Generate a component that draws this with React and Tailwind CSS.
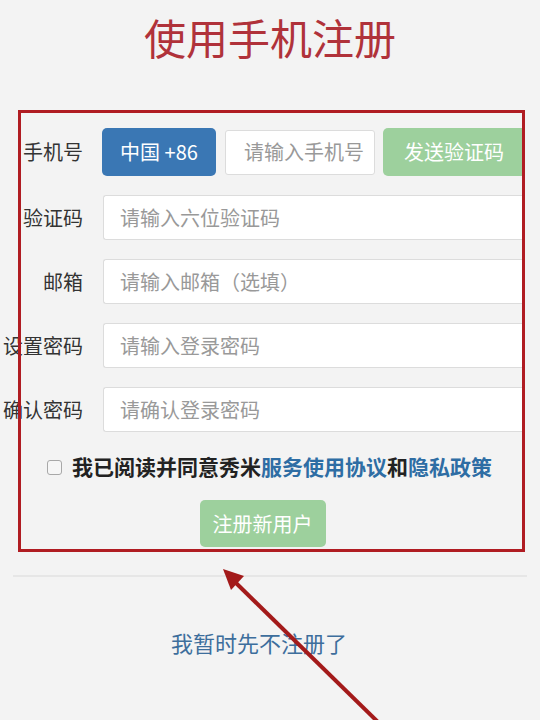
import React from "react";

const rows = [
  { label: "验证码", placeholder: "请输入六位验证码" },
  { label: "邮箱", placeholder: "请输入邮箱（选填）" },
  { label: "设置密码", placeholder: "请输入登录密码" },
  { label: "确认密码", placeholder: "请确认登录密码" },
];

const App = () => {
  return (
    <div className="relative w-[540px] h-[720px] overflow-hidden bg-[#f3f3f3] font-['Noto_Sans_CJK_SC',sans-serif]">
      <h1 className="pt-[12px] text-center text-[42px] leading-[50px] text-[#b0323a]">
        使用手机注册
      </h1>

      <div className="mt-[66px] pr-[15px]">
        <div className="flex items-center h-[48px]">
          <span className="w-[83px] text-right text-[20px] text-[#333]">手机号</span>
          <div className="ml-[19px] w-[114px] h-[48px] flex items-center justify-center rounded-[5px] bg-[#3a77b4] text-white text-[20px]">
            中国 +86
          </div>
          <div className="ml-[9px] w-[150px] h-[45px] flex items-center pl-[18px] overflow-hidden whitespace-nowrap rounded-[3px] bg-white border border-[#dcdcdc] text-[20px] text-[#999]">
            请输入手机号
          </div>
          <div className="ml-[8px] flex-1 h-[48px] flex items-center justify-center rounded-l-[5px] bg-[#9dd09d] text-white text-[20px]">
            发送验证码
          </div>
        </div>

        {rows.map(({ label, placeholder }, index) => (
          <div key={index} className="flex items-center h-[45px] mt-[19px]">
            <span className="w-[83px] text-right text-[20px] text-[#333] whitespace-nowrap">{label}</span>
            <div className="ml-[20px] flex-1 h-[45px] flex items-center pl-[16px] rounded-l-[3px] bg-white border border-r-0 border-[#dcdcdc] text-[20px] text-[#999]">
              {placeholder}
            </div>
          </div>
        ))}

        <div className="mt-[24px] h-[22px] pl-[47px] flex items-center gap-[10px]">
          <span className="w-[15px] h-[15px] rounded-[3px] border border-[#a8a8a8] bg-[#f6f6f6]"></span>
          <p className="text-[21px] font-semibold text-[#222] whitespace-nowrap">
            我已阅读并同意秀米
            <span className="text-[#2e6da4]">服务使用协议</span>和
            <span className="text-[#2e6da4]">隐私政策</span>
          </p>
        </div>

        <div className="mt-[22px] flex justify-center">
          <div className="w-[126px] h-[47px] flex items-center justify-center rounded-[5px] bg-[#9dd09d] text-white text-[20px]">
            注册新用户
          </div>
        </div>
      </div>

      <div className="mt-[28px] mx-[13px] h-[2px] bg-[#e6e6e6]"></div>

      <p className="mt-[50px] pr-[22px] text-center text-[22px] leading-[30px] text-[#3d6e9c]">
        我暂时先不注册了
      </p>

      <div className="absolute left-[18px] top-[110px] w-[507px] h-[442px] border-[3px] border-[#b01c22]"></div>

      <svg className="absolute inset-0 pointer-events-none" width="540" height="720" viewBox="0 0 540 720">
        <line x1="380" y1="724" x2="236" y2="583" stroke="#a31a1a" strokeWidth="4" />
        <polygon points="223,569 244,576 231,590" fill="#a31a1a" />
      </svg>
    </div>
  );
};

export default App;
